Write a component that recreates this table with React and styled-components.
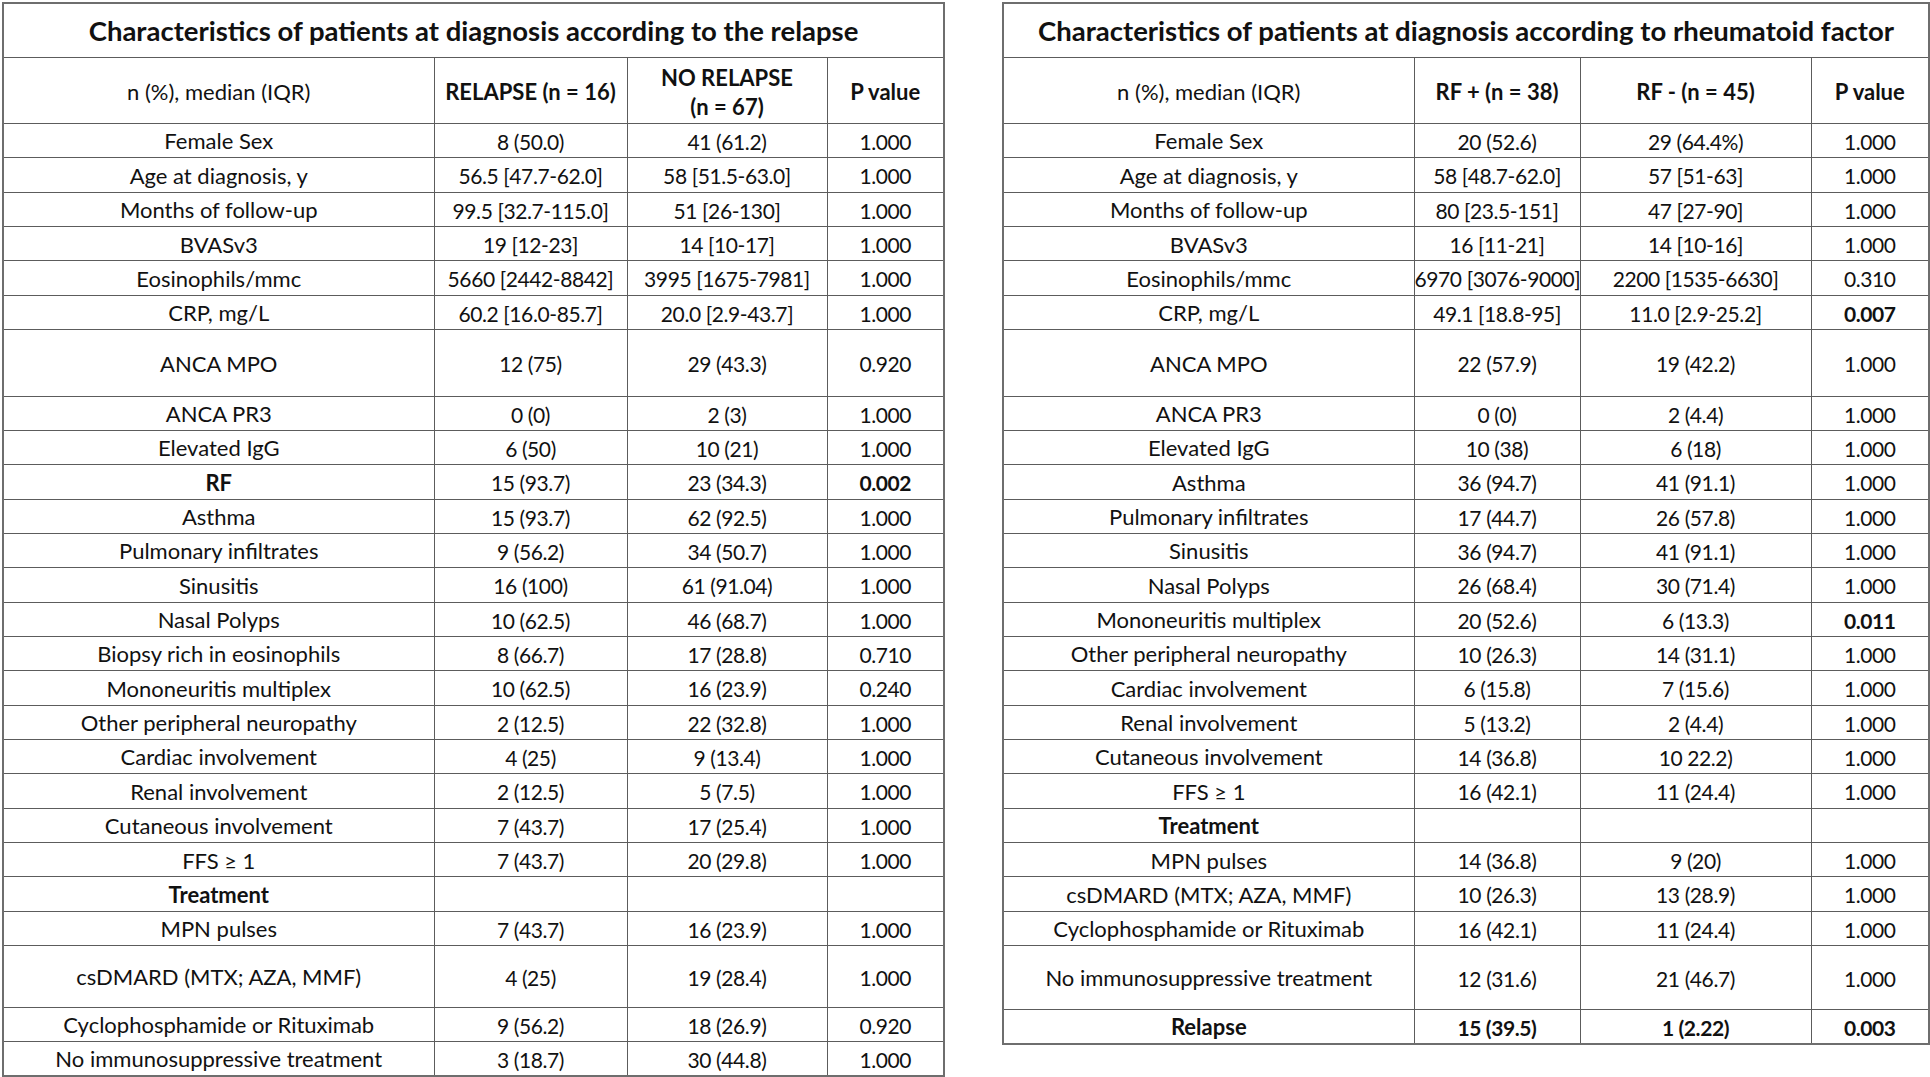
import React from 'react';
import styled, { createGlobalStyle } from 'styled-components';

const GlobalStyle = createGlobalStyle`
  html, body {
    margin: 0;
    padding: 0;
    background: #ffffff;
  }
  body {
    font-family: Lato, "Liberation Sans", sans-serif;
    color: #111;
  }
`;

const Page = styled.div`
  display: flex;
  align-items: flex-start;
  gap: 57px;
  padding: 2px 2px 0 2px;
`;

const Table = styled.table`
  border-collapse: collapse;
  table-layout: fixed;
  width: ${props => props.width}px;
  border: 2px solid #6e6e6e;
  font-size: 22px;
`;

const TitleCell = styled.th`
  height: 53px;
  padding: 0 6px;
  border: 1px solid #5c5c5c;
  font-weight: 700;
  font-size: 27.5px;
  text-align: center;
  vertical-align: middle;
  white-space: nowrap;
`;

const HeadCell = styled.th`
  height: 63px;
  padding: 2px 6px 0;
  border: 1px solid #5c5c5c;
  font-weight: ${props => (props.$regular ? 400 : 700)};
  text-align: center;
  vertical-align: middle;
  line-height: 29px;
`;

const Cell = styled.td`
  height: ${props => props.$h}px;
  padding: 2px 0 0;
  border: 1px solid #5c5c5c;
  font-weight: ${props => (props.$bold ? 700 : 400)};
  font-size: ${props => (props.$num ? '21px' : '22px')};
  letter-spacing: ${props => (props.$num ? '-0.4px' : '0')};
  text-align: center;
  vertical-align: middle;
  white-space: nowrap;
  line-height: 1.2;
`;

const left = {
  title: 'Characteristics of patients at diagnosis according to the relapse',
  width: 941,
  cols: [431, 193, 200, 117],
  heads: ['RELAPSE (n = 16)', <>NO RELAPSE<br />(n = 67)</>, 'P value'],
  rows: [
    ['Female Sex', '8 (50.0)', '41 (61.2)', '1.000'],
    ['Age at diagnosis, y', '56.5 [47.7-62.0]', '58 [51.5-63.0]', '1.000'],
    ['Months of follow-up', '99.5 [32.7-115.0]', '51 [26-130]', '1.000'],
    ['BVASv3', '19 [12-23]', '14 [10-17]', '1.000'],
    ['Eosinophils/mmc', '5660 [2442-8842]', '3995 [1675-7981]', '1.000'],
    ['CRP, mg/L', '60.2 [16.0-85.7]', '20.0 [2.9-43.7]', '1.000'],
    ['ANCA MPO', '12 (75)', '29 (43.3)', '0.920', { h: 63.5 }],
    ['ANCA PR3', '0 (0)', '2 (3)', '1.000'],
    ['Elevated IgG', '6 (50)', '10 (21)', '1.000'],
    ['RF', '15 (93.7)', '23 (34.3)', '0.002', { bold: [0, 3] }],
    ['Asthma', '15 (93.7)', '62 (92.5)', '1.000'],
    ['Pulmonary infiltrates', '9 (56.2)', '34 (50.7)', '1.000'],
    ['Sinusitis', '16 (100)', '61 (91.04)', '1.000'],
    ['Nasal Polyps', '10 (62.5)', '46 (68.7)', '1.000'],
    ['Biopsy rich in eosinophils', '8 (66.7)', '17 (28.8)', '0.710'],
    ['Mononeuritis multiplex', '10 (62.5)', '16 (23.9)', '0.240'],
    ['Other peripheral neuropathy', '2 (12.5)', '22 (32.8)', '1.000'],
    ['Cardiac involvement', '4 (25)', '9 (13.4)', '1.000'],
    ['Renal involvement', '2 (12.5)', '5 (7.5)', '1.000'],
    ['Cutaneous involvement', '7 (43.7)', '17 (25.4)', '1.000'],
    ['FFS ≥ 1', '7 (43.7)', '20 (29.8)', '1.000'],
    ['Treatment', '', '', '', { bold: [0] }],
    ['MPN pulses', '7 (43.7)', '16 (23.9)', '1.000'],
    ['csDMARD (MTX; AZA, MMF)', '4 (25)', '19 (28.4)', '1.000', { h: 58.5 }],
    ['Cyclophosphamide or Rituximab', '9 (56.2)', '18 (26.9)', '0.920'],
    ['No immunosuppressive treatment', '3 (18.7)', '30 (44.8)', '1.000'],
  ],
};

const right = {
  title: 'Characteristics of patients at diagnosis according to rheumatoid factor',
  width: 926,
  cols: [411, 166, 231, 118],
  heads: ['RF + (n = 38)', 'RF - (n = 45)', 'P value'],
  rows: [
    ['Female Sex', '20 (52.6)', '29 (64.4%)', '1.000'],
    ['Age at diagnosis, y', '58 [48.7-62.0]', '57 [51-63]', '1.000'],
    ['Months of follow-up', '80 [23.5-151]', '47 [27-90]', '1.000'],
    ['BVASv3', '16 [11-21]', '14 [10-16]', '1.000'],
    ['Eosinophils/mmc', '6970 [3076-9000]', '2200 [1535-6630]', '0.310'],
    ['CRP, mg/L', '49.1 [18.8-95]', '11.0 [2.9-25.2]', '0.007', { bold: [3] }],
    ['ANCA MPO', '22 (57.9)', '19 (42.2)', '1.000', { h: 63.5 }],
    ['ANCA PR3', '0 (0)', '2 (4.4)', '1.000'],
    ['Elevated IgG', '10 (38)', '6 (18)', '1.000'],
    ['Asthma', '36 (94.7)', '41 (91.1)', '1.000'],
    ['Pulmonary infiltrates', '17 (44.7)', '26 (57.8)', '1.000'],
    ['Sinusitis', '36 (94.7)', '41 (91.1)', '1.000'],
    ['Nasal Polyps', '26 (68.4)', '30 (71.4)', '1.000'],
    ['Mononeuritis multiplex', '20 (52.6)', '6 (13.3)', '0.011', { bold: [3] }],
    ['Other peripheral neuropathy', '10 (26.3)', '14 (31.1)', '1.000'],
    ['Cardiac involvement', '6 (15.8)', '7 (15.6)', '1.000'],
    ['Renal involvement', '5 (13.2)', '2 (4.4)', '1.000'],
    ['Cutaneous involvement', '14 (36.8)', '10 22.2)', '1.000'],
    ['FFS ≥ 1', '16 (42.1)', '11 (24.4)', '1.000'],
    ['Treatment', '', '', '', { bold: [0] }],
    ['MPN pulses', '14 (36.8)', '9 (20)', '1.000'],
    ['csDMARD (MTX; AZA, MMF)', '10 (26.3)', '13 (28.9)', '1.000'],
    ['Cyclophosphamide or Rituximab', '16 (42.1)', '11 (24.4)', '1.000'],
    ['No immunosuppressive treatment', '12 (31.6)', '21 (46.7)', '1.000', { h: 60.5 }],
    ['Relapse', '15 (39.5)', '1 (2.22)', '0.003', { bold: [0, 1, 2, 3] }],
  ],
};

function StatsTable({ data }) {
  return (
    <Table width={data.width}>
      <colgroup>
        {data.cols.map((w, i) => (
          <col key={i} style={{ width: w }} />
        ))}
      </colgroup>
      <thead>
        <tr>
          <TitleCell colSpan={4}>{data.title}</TitleCell>
        </tr>
        <tr>
          <HeadCell $regular>n (%), median (IQR)</HeadCell>
          {data.heads.map((h, i) => (
            <HeadCell key={i}>{h}</HeadCell>
          ))}
        </tr>
      </thead>
      <tbody>
        {data.rows.map((row, r) => {
          const opts = row[4] || {};
          const bold = opts.bold || [];
          return (
            <tr key={r}>
              {row.slice(0, 4).map((v, c) => (
                <Cell
                  key={c}
                  $h={opts.h || 31.35}
                  $num={c > 0}
                  $bold={bold.includes(c)}
                >
                  {v}
                </Cell>
              ))}
            </tr>
          );
        })}
      </tbody>
    </Table>
  );
}

export default function App() {
  return (
    <>
      <GlobalStyle />
      <Page>
        <StatsTable data={left} />
        <StatsTable data={right} />
      </Page>
    </>
  );
}
